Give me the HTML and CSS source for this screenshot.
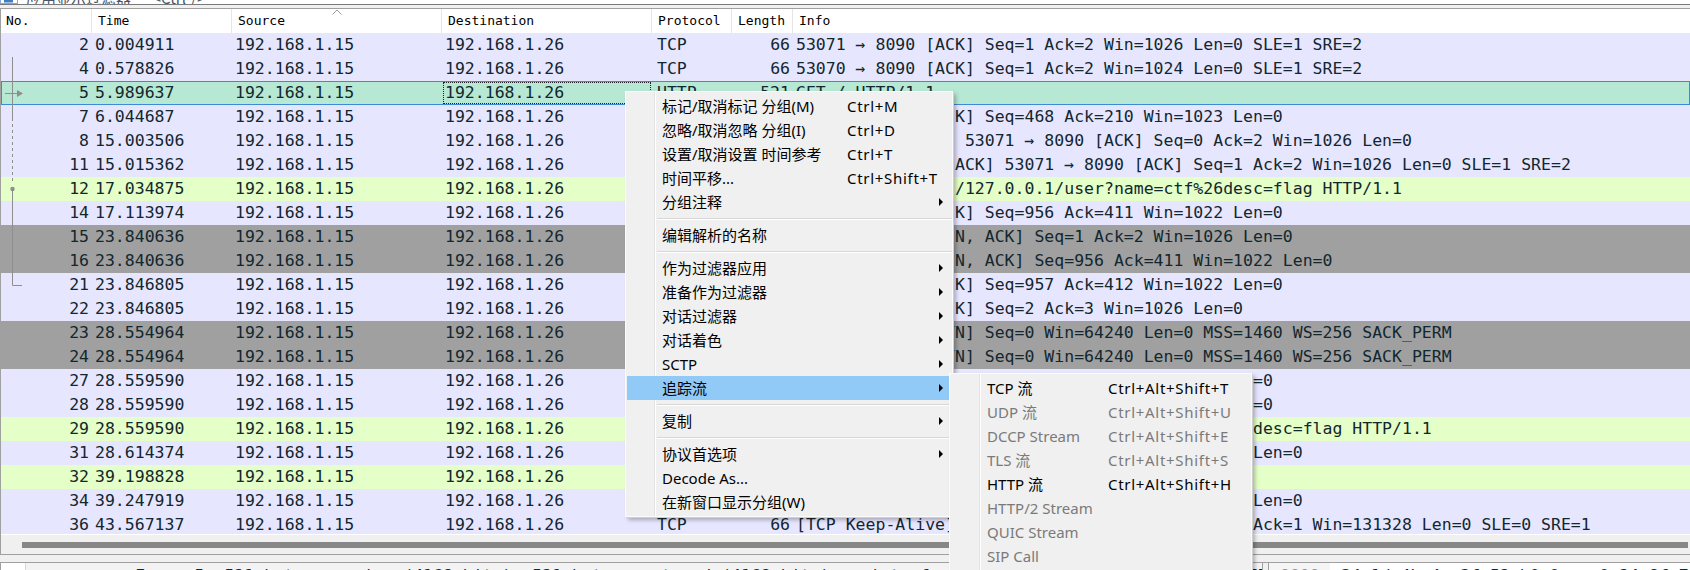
FILE: index.html
```html
<!DOCTYPE html>
<html lang="zh-CN">
<head>
<meta charset="utf-8">
<title>Wireshark</title>
<link rel="stylesheet" href="styles.css">
</head>
<body>
<div class="filterbar">
  <div class="filter">
    <svg class="filter-icon" width="20" height="4" viewBox="0 0 20 4"><rect x="0.5" y="-2" width="17" height="5.5" fill="#fff" stroke="#8aa8cc"/><rect x="4" y="0" width="9" height="2.5" fill="#3f7ec6"/></svg>
    <span class="filter-text">应用显示过滤器 … &lt;Ctrl-/&gt;</span>
  </div>
</div>

<div class="list">
  <div class="hdr">
    <span>No.</span>
    <span>Time</span>
    <span class="sorted">Source<svg class="sort" width="10" height="6" viewBox="0 0 10 6"><polyline points="0.5,5.5 5,1 9.5,5.5" fill="none" stroke="#9a9a9a" stroke-width="1"/></svg></span>
    <span>Destination</span>
    <span>Protocol</span>
    <span>Length</span>
    <span>Info</span>
  </div>
  <div class="rows">
    <div class="row lav"><span class="no">2</span><span>0.004911</span><span>192.168.1.15</span><span>192.168.1.26</span><span class="pr">TCP</span><span class="len">66</span><span>53071 → 8090 [ACK] Seq=1 Ack=2 Win=1026 Len=0 SLE=1 SRE=2</span></div>
    <div class="row lav"><span class="no">4</span><span>0.578826</span><span>192.168.1.15</span><span>192.168.1.26</span><span class="pr">TCP</span><span class="len">66</span><span>53070 → 8090 [ACK] Seq=1 Ack=2 Win=1024 Len=0 SLE=1 SRE=2</span></div>
    <div class="row sel"><span class="no">5</span><span>5.989637</span><span>192.168.1.15</span><span class="focus">192.168.1.26</span><span class="pr">HTTP</span><span class="len">521</span><span>GET / HTTP/1.1</span></div>
    <div class="row lav"><span class="no">7</span><span>6.044687</span><span>192.168.1.15</span><span>192.168.1.26</span><span class="pr">TCP</span><span class="len">54</span><span>53071 → 8090 [ACK] Seq=468 Ack=210 Win=1023 Len=0</span></div>
    <div class="row lav"><span class="no">8</span><span>15.003506</span><span>192.168.1.15</span><span>192.168.1.26</span><span class="pr">TCP</span><span class="len">55</span><span>[TCP Keep-Alive] 53071 → 8090 [ACK] Seq=0 Ack=2 Win=1026 Len=0</span></div>
    <div class="row lav"><span class="no">11</span><span>15.015362</span><span>192.168.1.15</span><span>192.168.1.26</span><span class="pr">TCP</span><span class="len">66</span><span>[TCP Keep-Alive ACK] 53071 → 8090 [ACK] Seq=1 Ack=2 Win=1026 Len=0 SLE=1 SRE=2</span></div>
    <div class="row grn"><span class="no">12</span><span>17.034875</span><span>192.168.1.15</span><span>192.168.1.26</span><span class="pr">HTTP</span><span class="len">549</span><span>GET /?url=http://127.0.0.1/user?name=ctf%26desc=flag HTTP/1.1</span></div>
    <div class="row lav"><span class="no">14</span><span>17.113974</span><span>192.168.1.15</span><span>192.168.1.26</span><span class="pr">TCP</span><span class="len">54</span><span>53071 → 8090 [ACK] Seq=956 Ack=411 Win=1022 Len=0</span></div>
    <div class="row gry"><span class="no">15</span><span>23.840636</span><span>192.168.1.15</span><span>192.168.1.26</span><span class="pr">TCP</span><span class="len">54</span><span>53070 → 8090 [FIN, ACK] Seq=1 Ack=2 Win=1026 Len=0</span></div>
    <div class="row gry"><span class="no">16</span><span>23.840636</span><span>192.168.1.15</span><span>192.168.1.26</span><span class="pr">TCP</span><span class="len">54</span><span>53071 → 8090 [FIN, ACK] Seq=956 Ack=411 Win=1022 Len=0</span></div>
    <div class="row lav"><span class="no">21</span><span>23.846805</span><span>192.168.1.15</span><span>192.168.1.26</span><span class="pr">TCP</span><span class="len">54</span><span>53071 → 8090 [ACK] Seq=957 Ack=412 Win=1022 Len=0</span></div>
    <div class="row lav"><span class="no">22</span><span>23.846805</span><span>192.168.1.15</span><span>192.168.1.26</span><span class="pr">TCP</span><span class="len">54</span><span>53070 → 8090 [ACK] Seq=2 Ack=3 Win=1026 Len=0</span></div>
    <div class="row gry"><span class="no">23</span><span>28.554964</span><span>192.168.1.15</span><span>192.168.1.26</span><span class="pr">TCP</span><span class="len">66</span><span>53073 → 8090 [SYN] Seq=0 Win=64240 Len=0 MSS=1460 WS=256 SACK_PERM</span></div>
    <div class="row gry"><span class="no">24</span><span>28.554964</span><span>192.168.1.15</span><span>192.168.1.26</span><span class="pr">TCP</span><span class="len">66</span><span>53074 → 8090 [SYN] Seq=0 Win=64240 Len=0 MSS=1460 WS=256 SACK_PERM</span></div>
    <div class="row lav"><span class="no">27</span><span>28.559590</span><span>192.168.1.15</span><span>192.168.1.26</span><span class="pr">TCP</span><span class="len">54</span><span>53073 → 8090 [ACK] Seq=1 Ack=1 Win=2102272 Len=0</span></div>
    <div class="row lav"><span class="no">28</span><span>28.559590</span><span>192.168.1.15</span><span>192.168.1.26</span><span class="pr">TCP</span><span class="len">54</span><span>53074 → 8090 [ACK] Seq=1 Ack=1 Win=2102272 Len=0</span></div>
    <div class="row grn"><span class="no">29</span><span>28.559590</span><span>192.168.1.15</span><span>192.168.1.26</span><span class="pr">HTTP</span><span class="len">552</span><span>GET /?url=http://127.0.0.1:80/user?name=ctf%26desc=flag HTTP/1.1</span></div>
    <div class="row lav"><span class="no">31</span><span>28.614374</span><span>192.168.1.15</span><span>192.168.1.26</span><span class="pr">TCP</span><span class="len">54</span><span>53073 → 8090 [ACK] Seq=496 Ack=210 Win=131072 Len=0</span></div>
    <div class="row grn"><span class="no">32</span><span>39.198828</span><span>192.168.1.15</span><span>192.168.1.26</span><span class="pr">HTTP</span><span class="len">480</span><span>GET /favicon.ico HTTP/1.1</span></div>
    <div class="row lav"><span class="no">34</span><span>39.247919</span><span>192.168.1.15</span><span>192.168.1.26</span><span class="pr">TCP</span><span class="len">54</span><span>53074 → 8090 [ACK] Seq=480 Ack=176 Win=131072 Len=0</span></div>
    <div class="row lav"><span class="no">36</span><span>43.567137</span><span>192.168.1.15</span><span>192.168.1.26</span><span class="pr">TCP</span><span class="len">66</span><span>[TCP Keep-Alive] 53073 → 8090 [ACK] Seq=49500 Ack=1 Win=131328 Len=0 SLE=0 SRE=1</span></div>
  </div>
  <div class="hscroll"><div class="thumb"></div></div>
</div>

<div class="splitter"></div>

<div class="bottom">
  <div class="details">
    <div class="dbox"></div>
    <div class="dtext"><span class="line">Frame 5: 521 bytes on wire (4168 bits), 521 bytes captured (4168 bits) on interface \Device\NPF_{6F8A2B1C-3D4E-4F5A-9B8C-7D6E5F4A3B2C}, id 0</span></div>
  </div>
  <div class="bytes">
    <div class="off"><span class="line">0000</span></div>
    <div class="hex"><span class="line">34 1d 4b 4a 3f 52 b0 0a  c0 24 8f 7d 08 00 45 00</span></div>
  </div>
</div>

<svg class="related" width="30" height="300" viewBox="0 0 30 300">
  <g stroke="#8e8e8e" stroke-width="1" fill="none">
    <line x1="12.5" y1="57" x2="12.5" y2="118"/>
    <line x1="12.5" y1="118" x2="12.5" y2="184" stroke-dasharray="3 3"/>
    <line x1="12.5" y1="189" x2="12.5" y2="285.5"/>
    <line x1="12.5" y1="285.5" x2="22" y2="285.5"/>
    <line x1="5" y1="93.5" x2="18" y2="93.5"/>
  </g>
  <polygon points="17,90 23,93.5 17,97" fill="#8e8e8e"/>
  <circle cx="12.5" cy="189" r="2.2" fill="#8e8e8e"/>
</svg>

<div class="menu main">
  <div class="mi"><span class="label">标记/取消标记 分组(M)</span><span class="sc">Ctrl+M</span></div>
  <div class="mi"><span class="label">忽略/取消忽略 分组(I)</span><span class="sc">Ctrl+D</span></div>
  <div class="mi"><span class="label">设置/取消设置 时间参考</span><span class="sc">Ctrl+T</span></div>
  <div class="mi"><span class="label">时间平移...</span><span class="sc">Ctrl+Shift+T</span></div>
  <div class="mi sub"><span class="label">分组注释</span></div>
  <div class="sep"></div>
  <div class="mi"><span class="label">编辑解析的名称</span></div>
  <div class="sep"></div>
  <div class="mi sub"><span class="label">作为过滤器应用</span></div>
  <div class="mi sub"><span class="label">准备作为过滤器</span></div>
  <div class="mi sub"><span class="label">对话过滤器</span></div>
  <div class="mi sub"><span class="label">对话着色</span></div>
  <div class="mi sub"><span class="label">SCTP</span></div>
  <div class="mi sub hl"><span class="label">追踪流</span></div>
  <div class="sep"></div>
  <div class="mi sub"><span class="label">复制</span></div>
  <div class="sep"></div>
  <div class="mi sub"><span class="label">协议首选项</span></div>
  <div class="mi"><span class="label">Decode As...</span></div>
  <div class="mi"><span class="label">在新窗口显示分组(W)</span></div>
</div>

<div class="menu submenu">
  <div class="mi"><span class="label">TCP 流</span><span class="sc">Ctrl+Alt+Shift+T</span></div>
  <div class="mi dis"><span class="label">UDP 流</span><span class="sc">Ctrl+Alt+Shift+U</span></div>
  <div class="mi dis"><span class="label">DCCP Stream</span><span class="sc">Ctrl+Alt+Shift+E</span></div>
  <div class="mi dis"><span class="label">TLS 流</span><span class="sc">Ctrl+Alt+Shift+S</span></div>
  <div class="mi"><span class="label">HTTP 流</span><span class="sc">Ctrl+Alt+Shift+H</span></div>
  <div class="mi dis"><span class="label">HTTP/2 Stream</span></div>
  <div class="mi dis"><span class="label">QUIC Stream</span></div>
  <div class="mi dis"><span class="label">SIP Call</span></div>
</div>
</body>
</html>
```

FILE: styles.css
```css
* { box-sizing: border-box; }

html, body { margin: 0; padding: 0; }

body {
  width: 1690px;
  height: 570px;
  overflow: hidden;
  position: relative;
  background: #f0f0f0;
  font-family: "DejaVu Sans Mono", "Liberation Mono", monospace;
}

/* top filter bar remnant */
.filterbar {
  height: 8px;
  background: #f0f0f0;
  overflow: hidden;
}
.filter {
  height: 5px;
  background: #fff;
  border-bottom: 1px solid #7a7a7a;
  display: flex;
  align-items: flex-end;
  overflow: hidden;
}
.filter-icon { flex: none; align-self: flex-start; }
.filter-text {
  margin-left: 6px;
  font: 15px/15px "Noto Sans CJK SC", "Noto Sans", sans-serif;
  color: #4a5566;
  flex: none;
  margin-bottom: -1px;
}

/* packet list */
.list {
  border-left: 1px solid #a0a0a0;
  border-bottom: 1px solid #a0a0a0;
  background: #fff;
}

.hdr, .row {
  display: grid;
  grid-template-columns: 91px 140px 210px 210px 80px 61px 1fr;
}

.hdr {
  height: 25px;
  border-top: 1px solid #a0a0a0;
  background: #fff;
  font-size: 13px;
  line-height: 24px;
  color: #000;
}
.hdr > span {
  padding-left: 6px;
  border-right: 1px solid #e5e5e5;
  white-space: nowrap;
  overflow: hidden;
}
.hdr > span:first-child { padding-left: 5px; }
.hdr > span:last-child { border-right: none; }
.hdr .sorted { position: relative; overflow: visible; }
.sort {
  position: absolute;
  left: 100px;
  top: 0;
}

.rows {
  height: 501px;
  overflow: hidden;
}

.row {
  height: 24px;
  line-height: 24px;
  font-size: 16.5px;
  color: #12272e;
  white-space: pre;
}
.row > span {
  overflow: hidden;
  padding: 0 3px;
}
.row .no { text-align: right; }
.row .pr { padding-left: 5px; }
.row .len { text-align: right; }

.lav { background: #e7e6ff; }
.grn { background: #e4ffc7; }
.gry { background: #a0a0a0; }
.sel {
  background: #b7e8d4;
  box-shadow: inset 0 0 0 1px #3a8bd9;
}
.focus {
  outline: 1px dotted #1e1e1e;
  outline-offset: -2px;
}

.hscroll {
  height: 20px;
  background: #f0f0f0;
  border-top: 1px solid #fff;
  padding: 7px 2px 0 21px;
}
.thumb {
  height: 6px;
  background: #878787;
}

.splitter { height: 7px; background: #f0f0f0; }

/* bottom panes */
.bottom {
  display: flex;
  height: 8px;
  border-top: 1px solid #a0a0a0;
  overflow: hidden;
  font-size: 16.5px;
  color: #12272e;
}
.line {
  display: block;
  line-height: 24px;
  margin-top: 1px;
  white-space: pre;
}
.details {
  width: 1262px;
  display: flex;
  border-left: 1px solid #a0a0a0;
  overflow: hidden;
}
.dbox { width: 25px; background: #fff; border-right: 1px solid #d8d8d8; flex: none; }
.dtext {
  flex: 1;
  background: #f3f3f3;
  padding-left: 109px;
  overflow: hidden;
}
.bytes {
  flex: 1;
  display: flex;
  border-left: 1px solid #a0a0a0;
  padding-left: 5px;
  background: #f0f0f0;
  overflow: hidden;
}
.off {
  width: 62px;
  flex: none;
  border-left: 1px solid #a0a0a0;
  background: #f5f5f5;
  color: #8a8a8a;
  padding-left: 11px;
}
.hex {
  flex: 1;
  background: #fff;
  padding-left: 11px;
  overflow: hidden;
}

/* related packets indicator */
.related {
  position: absolute;
  left: 0;
  top: 0;
  pointer-events: none;
}

/* context menus */
.menu {
  position: absolute;
  background: #f0f0f0;
  border: 1px solid #fbfbfb;
  box-shadow: 1px 1px 0 #cfcfcf, 3px 3px 4px rgba(0, 0, 0, 0.28);
  padding: 2px 3px 2px 1px;
  font: 15px "Noto Sans", "Noto Sans CJK SC", sans-serif;
  color: #000;
}
.menu::before {
  content: "";
  position: absolute;
  top: 0;
  bottom: 0;
  width: 1px;
  background: #e2e3e3;
  box-shadow: 1px 0 0 #ffffff;
}
.main {
  left: 625px;
  top: 91px;
  width: 328px;
  z-index: 2;
}
.main::before { left: 28px; }
.submenu {
  left: 949px;
  top: 373px;
  width: 303px;
  height: 230px;
  z-index: 3;
}
.submenu::before { left: 29px; }

.mi {
  position: relative;
  z-index: 1;
  display: flex;
  height: 24px;
  line-height: 24px;
  padding-left: 35px;
  white-space: nowrap;
}
.main .mi .label { width: 185px; flex: none; }
.submenu .mi { padding-left: 36px; }
.submenu .mi .label { width: 121px; flex: none; }
.mi .sc { letter-spacing: 0.7px; }
.mi.dis { color: #7a7a7a; }
.mi.hl { background: #91c9f7; }
.mi.sub::after {
  content: "";
  position: absolute;
  right: 6px;
  top: 8px;
  border-left: 4px solid #000;
  border-top: 4px solid transparent;
  border-bottom: 4px solid transparent;
}

.sep {
  position: relative;
  height: 9px;
  margin-left: 30px;
  margin-right: -3px;
}
.sep::before {
  content: "";
  position: absolute;
  left: 0;
  right: 0;
  top: 4px;
  height: 1px;
  background: #d7d7d7;
  box-shadow: 0 1px 0 #ffffff;
}
```
